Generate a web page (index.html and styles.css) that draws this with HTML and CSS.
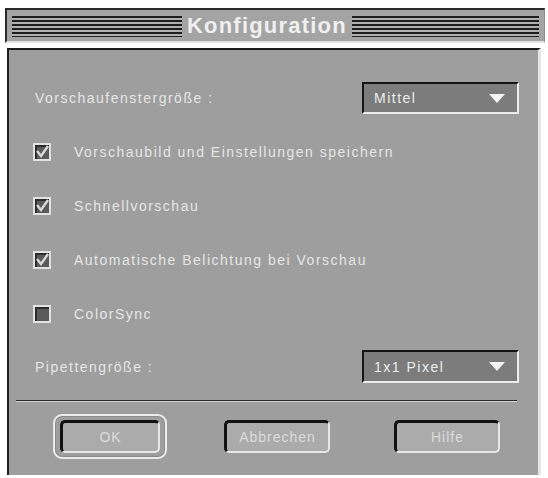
FILE: index.html
```html
<!DOCTYPE html>
<html lang="de">
<head>
  <meta charset="UTF-8" />
  <title>Konfiguration</title>
  <link rel="stylesheet" href="styles.css">
</head>
<body>
  <div class="dialog">
    <div class="titlebar">
      <span class="stripes stripes-left"></span>
      <h1>Konfiguration</h1>
      <span class="stripes"></span>
    </div>
    <div class="panel">
      <div class="field">
        <span class="label">Vorschaufenstergröße :</span>
        <div class="popup">
          <span>Mittel</span>
          <svg width="16" height="9" viewBox="0 0 16 9"><path d="M0 0H16L8 9Z" fill="#f4f4f4"/></svg>
        </div>
      </div>
      <label class="check on"><span class="box"><svg width="14" height="14" viewBox="0 0 14 14"><path d="M2 6L6 11L13 1" fill="none" stroke="#d8d8d8" stroke-width="2.4"/></svg></span>Vorschaubild und Einstellungen speichern</label>
      <label class="check on"><span class="box"><svg width="14" height="14" viewBox="0 0 14 14"><path d="M2 6L6 11L13 1" fill="none" stroke="#d8d8d8" stroke-width="2.4"/></svg></span>Schnellvorschau</label>
      <label class="check on"><span class="box"><svg width="14" height="14" viewBox="0 0 14 14"><path d="M2 6L6 11L13 1" fill="none" stroke="#d8d8d8" stroke-width="2.4"/></svg></span>Automatische Belichtung bei Vorschau</label>
      <label class="check"><span class="box"></span>ColorSync</label>
      <div class="field field-last">
        <span class="label">Pipettengröße :</span>
        <div class="popup">
          <span>1x1 Pixel</span>
          <svg width="16" height="9" viewBox="0 0 16 9"><path d="M0 0H16L8 9Z" fill="#f4f4f4"/></svg>
        </div>
      </div>
      <div class="sep"></div>
      <div class="buttons">
        <div class="default-ring"><button class="btn">OK</button></div>
        <button class="btn btn-cancel">Abbrechen</button>
        <button class="btn btn-help">Hilfe</button>
      </div>
    </div>
  </div>
</body>
</html>
```

FILE: styles.css
```css
body {
  margin: 0;
  background: #fff;
  font-family: 'Liberation Sans', 'DejaVu Sans', sans-serif;
  color: #e6e6e6;
}
.dialog {
  width: 540px;
  margin: 8px 0 0 5px;
}
.titlebar {
  height: 35px;
  box-sizing: border-box;
  background: #a4a4a4;
  border-top: 2px solid #2a2a2a;
  border-left: 2px solid #2a2a2a;
  border-right: 1px solid #8a8a8a;
  border-bottom: 2px solid #e4e4e4;
  display: flex;
  align-items: center;
  padding: 0 5px;
  gap: 5px;
}
.stripes {
  flex: 1;
  height: 21px;
  margin-top: 1px;
  background: repeating-linear-gradient(#1e1e1e 0 2px, #b0b0b0 2px 4px);
}
.stripes-left {
  flex: 0 0 170px;
}
.titlebar h1 {
  margin: 0;
  font-size: 22px;
  font-weight: 700;
  color: #f0f0f0;
  letter-spacing: 1.2px;
  line-height: 1;
}
.panel {
  margin: 5px 0 0 2px;
  width: 534px;
  height: 427px;
  box-sizing: border-box;
  background: #9e9e9e;
  border-top: 2px solid #1e1e1e;
  border-left: 2px solid #1e1e1e;
  border-right: 3px solid #e6e6e6;
  padding: 32px 19px 0 24px;
  display: flex;
  flex-direction: column;
}
.field {
  display: flex;
  justify-content: space-between;
  align-items: center;
  height: 32px;
  margin-bottom: 11px;
}
.field-last {
  margin: 9px 0 0;
  height: 33px;
}
.label, .check {
  font-size: 14px;
  letter-spacing: 1.5px;
  color: #e6e6e6;
}
.label {
  padding-left: 2px;
}
.popup {
  width: 157px;
  height: 100%;
  box-sizing: border-box;
  background: #7c7c7c;
  border-top: 2px solid #141414;
  border-left: 2px solid #141414;
  border-bottom: 2px solid #ececec;
  border-right: 2px solid #ececec;
  display: flex;
  align-items: center;
  justify-content: space-between;
  padding: 0 12px 0 10px;
  font-size: 14px;
  letter-spacing: 1.5px;
  color: #eeeeee;
}
.popup svg {
  display: block;
}
.check {
  display: flex;
  align-items: center;
  height: 54px;
}
.box {
  width: 18px;
  height: 18px;
  box-sizing: border-box;
  border: 2px solid #e2e2e2;
  background: #5a5a5a;
  box-shadow: inset 2px 2px 0 #2c2c2c;
  margin: 0 23px 0 0;
  display: flex;
  align-items: center;
  justify-content: center;
}
.box svg {
  display: block;
}
.sep {
  margin: 17px 2px 0 -17px;
  height: 1px;
  background: #262626;
  border-bottom: 1px solid #d6d6d6;
}
.buttons {
  display: flex;
  align-items: center;
  margin: 12px 0 0 20px;
}
.default-ring {
  padding: 4px 5px;
  border: 2px solid #ececec;
  border-radius: 9px;
  box-shadow: inset 0 0 0 1px #8c8c8c;
}
.btn {
  font-family: inherit;
  font-size: 14px;
  letter-spacing: 1px;
  color: #dcdcdc;
  background: #ababab;
  width: 106px;
  height: 33px;
  box-sizing: border-box;
  border-top: 3px solid #111;
  border-left: 3px solid #111;
  border-bottom: 2px solid #e8e8e8;
  border-right: 2px solid #e8e8e8;
  border-radius: 5px;
  padding: 0;
}
.default-ring .btn {
  width: 100px;
}
.btn-cancel {
  margin-left: 57px;
}
.btn-help {
  margin-left: 64px;
}
```
